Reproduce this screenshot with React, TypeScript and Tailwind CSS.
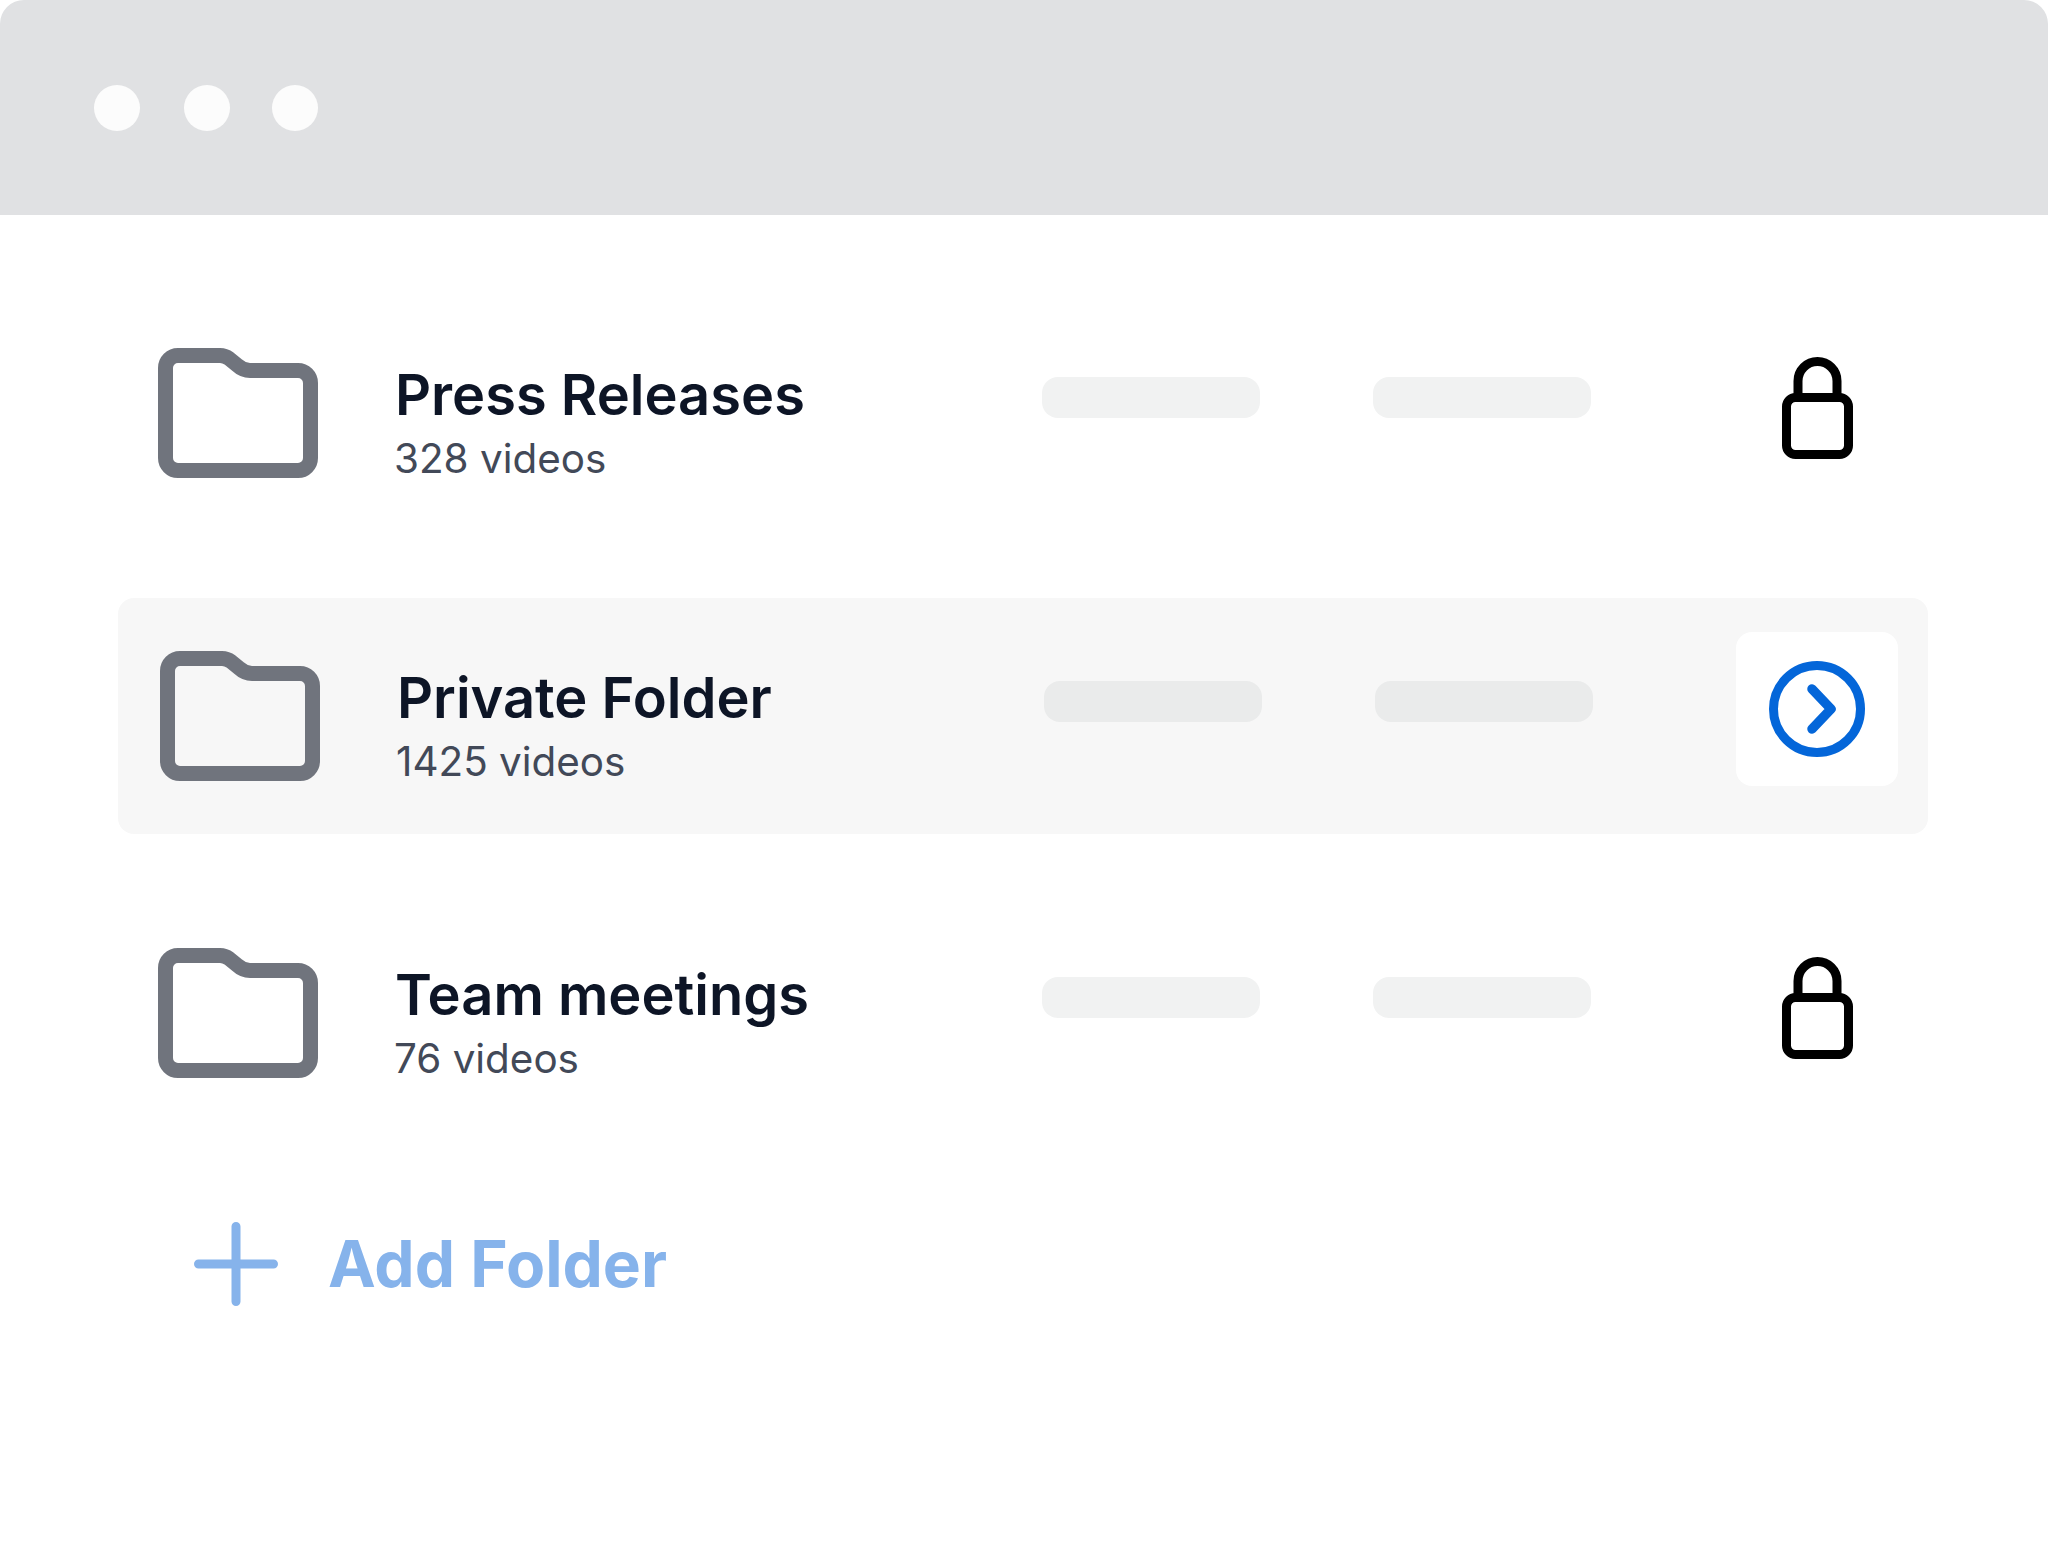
function FolderIcon() {
  return (
    <svg width="160" height="130" viewBox="0 0 160 130" fill="none" className="shrink-0">
      <path
        d="M7.5 20A12.5 12.5 0 0 1 20 7.5H62Q67 7.5 71 10.5L79 17Q85 22.5 92 22.5H140A12.5 12.5 0 0 1 152.5 35V110A12.5 12.5 0 0 1 140 122.5H20A12.5 12.5 0 0 1 7.5 110Z"
        stroke="#70747d"
        strokeWidth="15"
        strokeLinejoin="round"
      />
    </svg>
  );
}

function LockIcon() {
  return (
    <svg width="71" height="102" viewBox="0 0 71 102" fill="none">
      <rect x="4.5" y="40.5" width="62" height="57" rx="9" stroke="#000" strokeWidth="9" />
      <path d="M16 40V24a19.5 19.5 0 0 1 39 0V40" stroke="#000" strokeWidth="9" />
    </svg>
  );
}

function ArrowIcon() {
  return (
    <svg width="96" height="96" viewBox="0 0 96 96" fill="none">
      <circle cx="48" cy="48" r="43.5" stroke="#0466d9" strokeWidth="9" />
      <path
        d="M43 28L62 48L43 68"
        stroke="#0466d9"
        strokeWidth="9.5"
        strokeLinecap="round"
        strokeLinejoin="round"
      />
    </svg>
  );
}

function PlusIcon() {
  return (
    <svg width="84" height="84" viewBox="0 0 84 84" fill="none" className="shrink-0">
      <path d="M42 4.5V79.5M4.5 42H79.5" stroke="#86b3eb" strokeWidth="9" strokeLinecap="round" />
    </svg>
  );
}

function FolderRow({ name, count, active }: { name: string; count: string; active?: boolean }) {
  return (
    <div
      className={
        active
          ? "mx-[118px] mt-[67px] flex h-[236px] w-[1810px] items-center rounded-2xl bg-[#f7f7f7] pl-[42px] pr-[30px]"
          : "mx-[118px] flex h-[236px] w-[1810px] items-center pl-[40px] pr-[30px]"
      }
    >
      <FolderIcon />
      <div className="ml-[77px] mt-[19px] w-[647px] shrink-0">
        <div className="text-[56px] font-semibold leading-[64px] text-[#0d1526]">{name}</div>
        <div className="-ml-px mt-[8px] text-[40.4px] leading-[48px] text-[#424958]">{count}</div>
      </div>
      <div className={active ? "mb-[30px] h-[41px] w-[218px] rounded-2xl bg-[#eaebeb]" : "mb-[32px] h-[41px] w-[218px] rounded-2xl bg-[#f1f2f2]"} />
      <div className={active ? "mb-[30px] ml-[113px] h-[41px] w-[218px] rounded-2xl bg-[#eaebeb]" : "mb-[32px] ml-[113px] h-[41px] w-[218px] rounded-2xl bg-[#f1f2f2]"} />
      {active ? (
        <div className="mb-[14px] ml-auto flex h-[154px] w-[162px] items-center justify-center rounded-2xl bg-white">
          <ArrowIcon />
        </div>
      ) : (
        <div className="mb-[10px] ml-[191px]">
          <LockIcon />
        </div>
      )}
    </div>
  );
}

export default function App() {
  return (
    <div className="h-[1552px] w-[2048px] overflow-hidden rounded-[24px] bg-white font-['Inter',sans-serif]">
      <div className="flex h-[215px] items-center gap-[44px] bg-[#e0e1e3] pl-[94px]">
        <div className="h-[46px] w-[46px] rounded-full bg-[#fcfcfc]" />
        <div className="h-[46px] w-[46px] rounded-full bg-[#fcfcfc]" />
        <div className="-ml-[2px] h-[46px] w-[46px] rounded-full bg-[#fcfcfc]" />
      </div>
      <div className="pt-[80px]">
        <FolderRow name="Press Releases" count="328 videos" />
        <FolderRow name="Private Folder" count="1425 videos" active />
        <div className="mt-[61px]">
          <FolderRow name="Team meetings" count="76 videos" />
        </div>
        <div className="ml-[194px] mt-[91px] flex items-center gap-[50px]">
          <PlusIcon />
          <span className="text-[64px] font-bold leading-[84px] text-[#86b3eb]">Add Folder</span>
        </div>
      </div>
    </div>
  );
}
